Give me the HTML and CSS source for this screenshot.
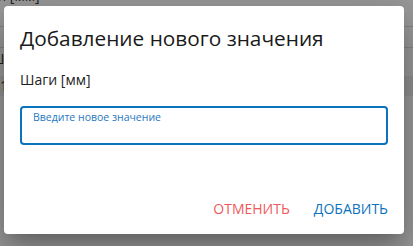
FILE: index.html
```html
<!DOCTYPE html>
<html lang="ru">
<head>
<meta charset="utf-8">
<title>Добавление нового значения</title>
<link rel="stylesheet" href="styles.css">
</head>
<body>
<div class="page">
  <div class="page-head">Шаги [мм]</div>
  <div class="page-row"></div>
  <div class="page-row page-row-label">Ши</div>
  <div class="page-row page-row-shade">11</div>
</div>
<div class="backdrop"></div>
<div class="dialog" role="dialog">
  <h2 class="dialog-title">Добавление нового значения</h2>
  <div class="dialog-content">
    <p class="field-caption">Шаги [мм]</p>
    <label class="field">
      <span class="field-label">Введите новое значение</span>
      <input class="field-input" type="text">
    </label>
  </div>
  <div class="dialog-actions">
    <button class="btn btn-cancel">Отменить</button>
    <button class="btn btn-add">Добавить</button>
  </div>
</div>
</body>
</html>
```
FILE: styles.css
```css
html, body {
  margin: 0;
  padding: 0;
  width: 413px;
  height: 246px;
  overflow: hidden;
  font-family: "Open Sans", "Noto Sans", sans-serif;
}
body {
  position: relative;
  background: #ffffff;
}
.page {
  color: #333;
  font-size: 14px;
}
.page-head {
  margin-left: -31px;
  margin-top: -14px;
  height: 41px;
  line-height: 20px;
  border-bottom: 1px solid #dcdcdc;
  box-sizing: border-box;
}
.page-row {
  height: 21px;
  border-bottom: 1px solid #dcdcdc;
  box-sizing: border-box;
}
.page-row-label {
  height: 28px;
  line-height: 22px;
  margin-left: -10px;
  border-bottom: none;
}
.page-row-shade {
  background: #f1f1f1;
  height: 20px;
  line-height: 20px;
  margin-left: -8px;
  border-bottom: none;
}
.backdrop {
  position: absolute;
  inset: 0;
  background: rgba(0, 0, 0, 0.4);
}
.dialog {
  position: absolute;
  left: 4px;
  top: 6px;
  width: 400px;
  height: 228px;
  background: #fff;
  border-radius: 4px;
  box-shadow: 0 11px 15px -7px rgba(0,0,0,.2), 0 24px 38px 3px rgba(0,0,0,.14), 0 9px 46px 8px rgba(0,0,0,.12);
  display: flex;
  flex-direction: column;
  box-sizing: border-box;
}
.dialog-title {
  margin: 0;
  padding: 20px 16px 0;
  font-size: 20.8px;
  line-height: 24px;
  font-weight: 500;
  color: #1a1a1a;
}
.dialog-content {
  padding: 20px 16px 0;
}
.field-caption {
  margin: 0 0 16px;
  font-size: 14px;
  line-height: 20px;
  color: #222;
}
.field {
  display: flex;
  flex-direction: column;
  height: 39px;
  box-sizing: border-box;
  border: 2px solid #0b72bd;
  border-radius: 4px;
  padding: 2px 11px 0;
}
.field-label {
  font-size: 10.5px;
  line-height: 14px;
  color: #1f78c1;
}
.field-input {
  border: 0;
  outline: 0;
  padding: 0;
  font: inherit;
  font-size: 14px;
  background: transparent;
}
.dialog-actions {
  margin-top: auto;
  padding: 8px;
  display: flex;
  justify-content: flex-end;
  gap: 8px;
}
.btn {
  border: 0;
  background: transparent;
  min-height: 36px;
  padding: 0 8px;
  font-family: "Open Sans", "Noto Sans", sans-serif;
  font-size: 14px;
  font-weight: 500;
  text-transform: uppercase;
}
.btn-cancel {
  color: #f0595b;
}
.btn-add {
  color: #0b72bd;
}
```
